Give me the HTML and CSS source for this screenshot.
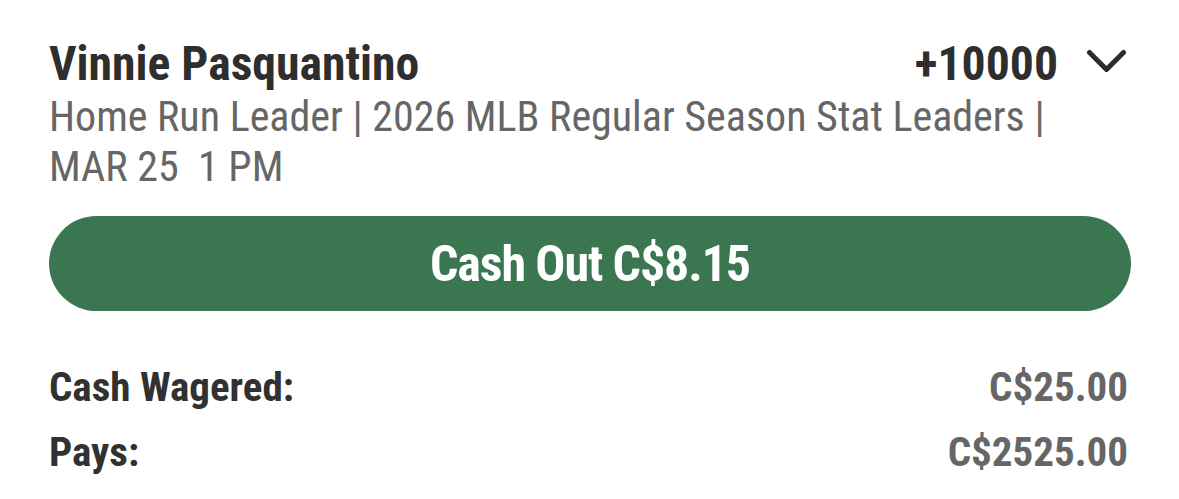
FILE: index.html
```html
<!DOCTYPE html>
<html>
<head>
<meta charset="utf-8">
<link rel="stylesheet" href="styles.css">
</head>
<body>
<div class="bet">
  <div class="head">
    <div class="title">Vinnie Pasquantino</div>
    <div class="odds">
      <span class="price">+10000</span>
      <svg class="chev" width="41" height="25" viewBox="0 0 41 25"><path d="M3.5 3.5 L20.5 20.5 L37.5 3.5" fill="none" stroke="#2b2b2b" stroke-width="5" stroke-linecap="round" stroke-linejoin="round"/></svg>
    </div>
  </div>
  <div class="sub">Home Run Leader | 2026 MLB Regular Season Stat Leaders |<br>MAR 25&nbsp; 1 PM</div>
  <button class="cash">Cash Out C$8.15</button>
  <div class="rows">
    <div class="row"><span class="lbl">Cash Wagered:</span><span class="val">C$25.00</span></div>
    <div class="row"><span class="lbl">Pays:</span><span class="val">C$2525.00</span></div>
  </div>
</div>
</body>
</html>
```
FILE: styles.css
```css
html, body { margin: 0; padding: 0; background: #fff; }
body { font-family: Roboto, "Noto Sans", sans-serif; font-stretch: condensed; }
.bet { padding: 36px 48px 0 49px; }
.head { display: flex; justify-content: space-between; align-items: center; height: 56px; }
.title { font-size: 47.7px; line-height: 56px; font-weight: 700; color: #2e2e2e; }
.odds { display: flex; align-items: center; gap: 28px; padding-right: 4px; }
.price { font-size: 47.7px; line-height: 56px; font-weight: 700; color: #2e2e2e; }
.chev { display: block; margin-top: -6px; }
.sub { font-size: 42px; line-height: 50px; color: #666; }
.cash { display: flex; align-items: center; justify-content: center; width: 100%; height: 95px; margin-top: 24px; padding: 0; border: none; border-radius: 48px; background: #3a7650; color: #fff; font-family: inherit; font-stretch: condensed; font-size: 50px; letter-spacing: -1.1px; font-weight: 700; }
.rows { margin-top: 44px; }
.row { display: flex; justify-content: space-between; line-height: 65px; }
.lbl { font-size: 41px; font-weight: 700; color: #313131; }
.val { font-size: 41px; font-weight: 700; color: #666; padding-right: 3px; }
```
